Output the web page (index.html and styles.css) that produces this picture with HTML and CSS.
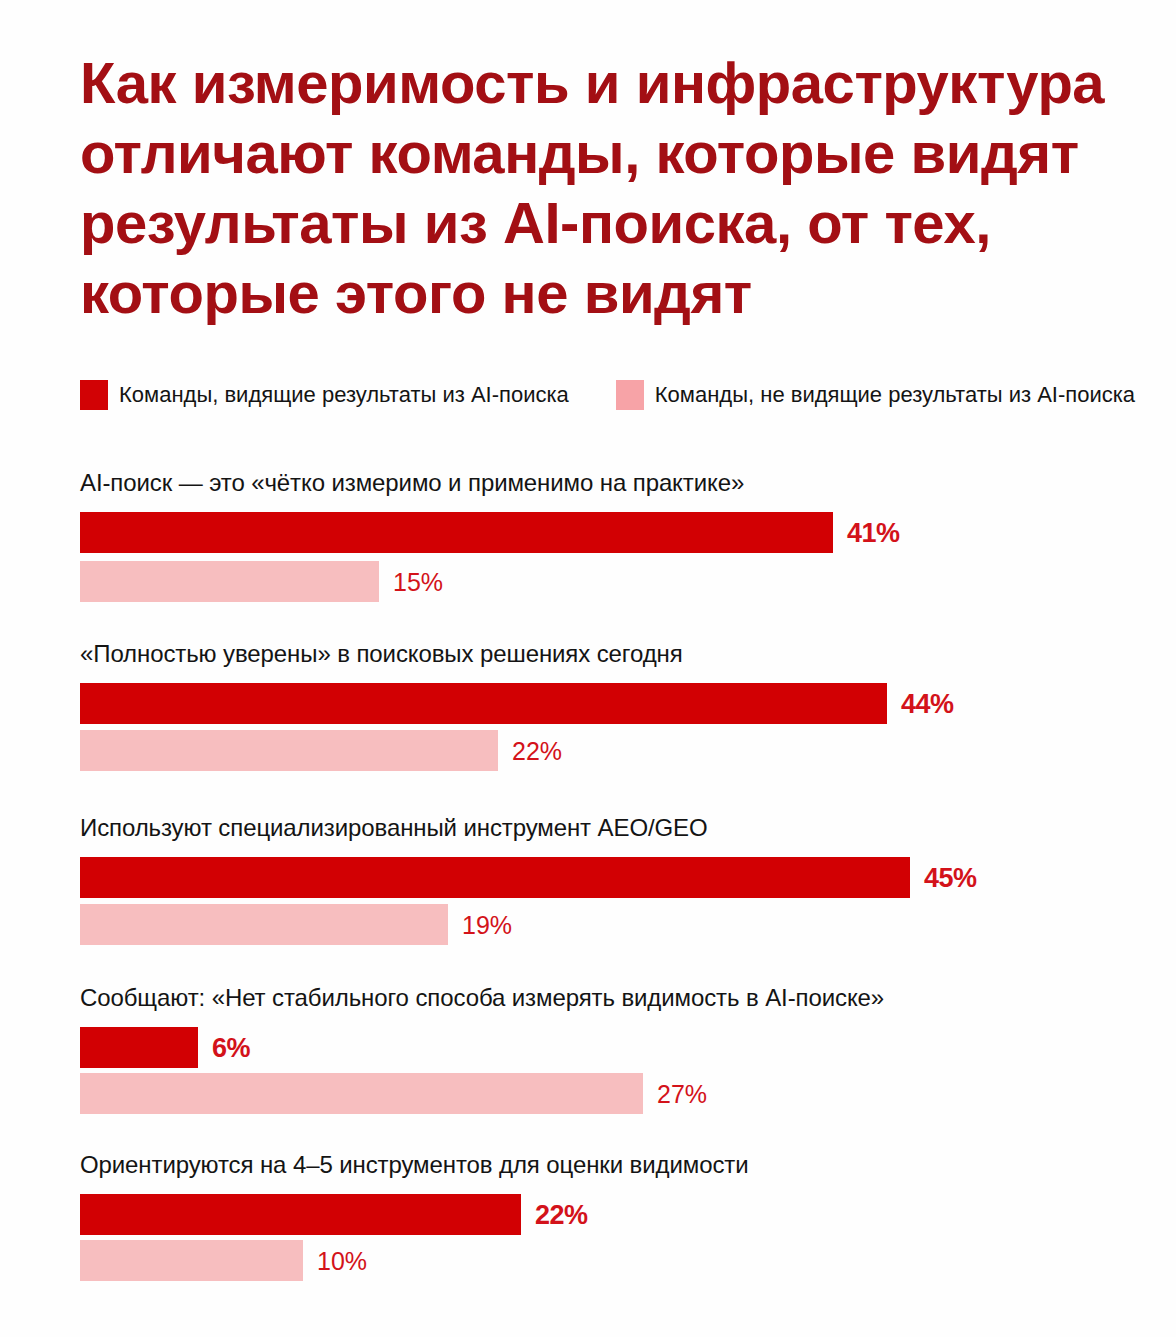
FILE: index.html
```html
<!DOCTYPE html>
<html lang="ru">
<head>
<meta charset="utf-8">
<title>AI-поиск</title>
<link rel="stylesheet" href="styles.css">
</head>
<body>
<main class="page">
  <h1 class="title">Как измеримость и инфраструктура<br>отличают команды, которые видят<br>результаты из AI-поиска, от тех,<br>которые этого не видят</h1>

  <div class="legend">
    <div class="legend-item"><span class="swatch swatch-strong"></span><span class="legend-text">Команды, видящие результаты из AI-поиска</span></div>
    <div class="legend-item"><span class="swatch swatch-soft"></span><span class="legend-text">Команды, не видящие результаты из AI-поиска</span></div>
  </div>

  <section class="groups">
    <div class="group">
      <div class="label">AI-поиск — это «чётко измеримо и применимо на практике»</div>
      <div class="bars bars-loose">
        <div class="row"><div class="bar bar-strong" style="width:753px"></div><span class="value value-strong">41%</span></div>
        <div class="row"><div class="bar bar-soft" style="width:299px"></div><span class="value">15%</span></div>
      </div>
    </div>

    <div class="group">
      <div class="label">«Полностью уверены» в поисковых решениях сегодня</div>
      <div class="bars">
        <div class="row"><div class="bar bar-strong" style="width:807px"></div><span class="value value-strong">44%</span></div>
        <div class="row"><div class="bar bar-soft" style="width:418px"></div><span class="value">22%</span></div>
      </div>
    </div>

    <div class="group group-far">
      <div class="label">Используют специализированный инструмент AEO/GEO</div>
      <div class="bars">
        <div class="row"><div class="bar bar-strong" style="width:830px"></div><span class="value value-strong">45%</span></div>
        <div class="row"><div class="bar bar-soft" style="width:368px"></div><span class="value">19%</span></div>
      </div>
    </div>

    <div class="group group-near">
      <div class="label">Сообщают: «Нет стабильного способа измерять видимость в AI-поиске»</div>
      <div class="bars bars-tight">
        <div class="row"><div class="bar bar-strong" style="width:118px"></div><span class="value value-strong">6%</span></div>
        <div class="row"><div class="bar bar-soft" style="width:563px"></div><span class="value">27%</span></div>
      </div>
    </div>

    <div class="group group-nearest">
      <div class="label">Ориентируются на 4–5 инструментов для оценки видимости</div>
      <div class="bars bars-tight">
        <div class="row"><div class="bar bar-strong" style="width:441px"></div><span class="value value-strong">22%</span></div>
        <div class="row"><div class="bar bar-soft" style="width:223px"></div><span class="value">10%</span></div>
      </div>
    </div>
  </section>
</main>
</body>
</html>
```

FILE: styles.css
```css
* {
  box-sizing: border-box;
}

html, body {
  margin: 0;
  padding: 0;
  background: #fefefe;
}

body {
  font-family: "Liberation Sans", Arial, sans-serif;
  color: #141414;
}

.page {
  width: 1176px;
  min-height: 1337px;
  padding: 48px 0 0 80px;
}

.title {
  margin: 0;
  font-size: 58px;
  line-height: 70px;
  font-weight: 700;
  letter-spacing: -0.45px;
  color: #a30f14;
}

.legend {
  display: flex;
  align-items: center;
  gap: 47px;
  margin-top: 52px;
  height: 30px;
}

.legend-item {
  display: flex;
  align-items: center;
  gap: 11px;
}

.swatch {
  display: block;
  width: 28px;
  height: 30px;
}

.swatch-strong {
  background: #d20205;
}

.swatch-soft {
  background: #f7a3a7;
}

.legend-text {
  font-size: 22px;
  line-height: 30px;
}

.groups {
  display: flex;
  flex-direction: column;
  margin-top: 59px;
}

.group + .group {
  margin-top: 38px;
}

.group.group-far {
  margin-top: 43px;
}

.group.group-near {
  margin-top: 39px;
}

.group.group-nearest {
  margin-top: 37px;
}

.label {
  font-size: 24px;
  line-height: 28px;
  height: 28px;
  letter-spacing: -0.1px;
}

.bars {
  display: flex;
  flex-direction: column;
  gap: 6px;
  margin-top: 15px;
}

.bars.bars-loose {
  gap: 8px;
}

.bars.bars-tight {
  gap: 5px;
}

.row {
  display: flex;
  align-items: center;
  height: 41px;
}

.bar {
  height: 41px;
  flex: none;
}

.bar-strong {
  background: #d20003;
}

.bar-soft {
  background: #f7bebf;
}

.value {
  margin-left: 14px;
  font-size: 25px;
  line-height: 30px;
  color: #d3121a;
}

.value-strong {
  font-weight: 700;
  font-size: 27px;
  letter-spacing: -0.5px;
}
```
